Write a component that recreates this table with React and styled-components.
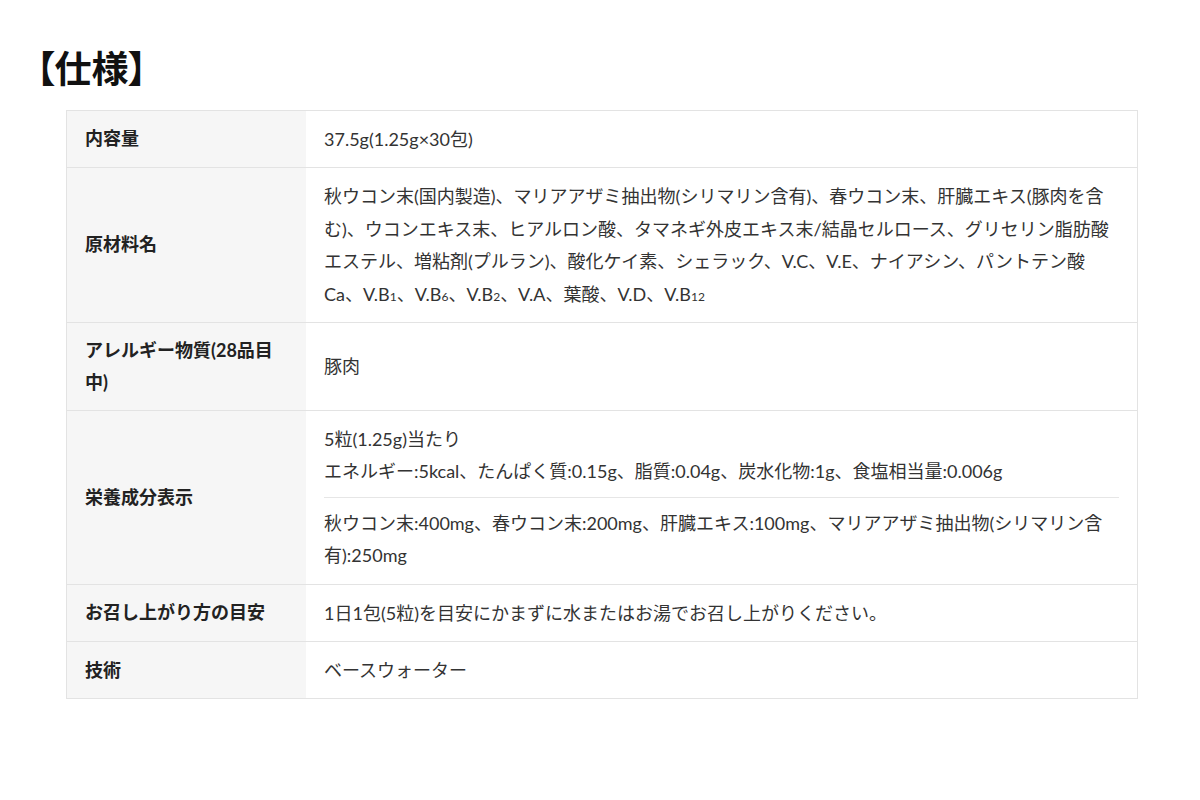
import React from "react";
import styled, { createGlobalStyle } from "styled-components";

const GlobalStyle = createGlobalStyle`
  body {
    margin: 0;
    background: #fff;
    font-family: Lato, "Noto Sans CJK JP", sans-serif;
    color: #333;
  }
`;

const Page = styled.div`
  width: 1200px;
  padding-top: 48px;
`;

const Title = styled.h2`
  margin: 0 0 20px;
  padding-left: 36px;
  font-size: 37px;
  line-height: 42px;
  font-weight: 700;
  color: #111;
  font-feature-settings: "palt";
`;

const Table = styled.table`
  margin-left: 66px;
  width: 1072px;
  border-collapse: collapse;
  border: 1px solid #e3e3e3;
  font-size: 18px;
  line-height: 32.4px;
`;

const Row = styled.tr`
  border-bottom: 1px solid #e3e3e3;
`;

const Label = styled.th`
  width: 203px;
  padding: 12px 18px;
  background: #f6f6f6;
  text-align: left;
  vertical-align: middle;
  font-weight: 700;
  color: #222;
  line-height: 31.5px;
`;

const Value = styled.td`
  padding: 12px 18px;
  background: #fff;
  vertical-align: middle;
  font-weight: 400;
`;

const Divider = styled.hr`
  margin: 9px 0;
  border: 0;
  border-top: 1px solid #e6e6e6;
`;

const Sub = styled.span`
  font-size: 12px;
  line-height: 1;
`;

const specs = [
  { label: "内容量", value: "37.5g(1.25g×30包)" },
  {
    label: "原材料名",
    value: (
      <>
        秋ウコン末(国内製造)、マリアアザミ抽出物(シリマリン含有)、春ウコン末、肝臓エキス(豚肉を含む)、ウコンエキス末、ヒアルロン酸、タマネギ外皮エキス末/結晶セルロース、グリセリン脂肪酸エステル、増粘剤(プルラン)、酸化ケイ素、シェラック、V.C、V.E、ナイアシン、パントテン酸Ca、V.B<Sub>1</Sub>、V.B<Sub>6</Sub>、V.B<Sub>2</Sub>、V.A、葉酸、V.D、V.B<Sub>12</Sub>
      </>
    ),
  },
  { label: "アレルギー物質(28品目中)", value: "豚肉" },
  {
    label: "栄養成分表示",
    value: (
      <>
        5粒(1.25g)当たり
        <br />
        エネルギー:5kcal、たんぱく質:0.15g、脂質:0.04g、炭水化物:1g、食塩相当量:0.006g
        <Divider />
        秋ウコン末:400mg、春ウコン末:200mg、肝臓エキス:100mg、マリアアザミ抽出物(シリマリン含有):250mg
      </>
    ),
  },
  {
    label: "お召し上がり方の目安",
    value: "1日1包(5粒)を目安にかまずに水またはお湯でお召し上がりください。",
  },
  { label: "技術", value: "ベースウォーター" },
];

export default function App() {
  return (
    <Page>
      <GlobalStyle />
      <Title>【仕様】</Title>
      <Table>
        <tbody>
          {specs.map((s) => (
            <Row key={s.label}>
              <Label>{s.label}</Label>
              <Value>{s.value}</Value>
            </Row>
          ))}
        </tbody>
      </Table>
    </Page>
  );
}
